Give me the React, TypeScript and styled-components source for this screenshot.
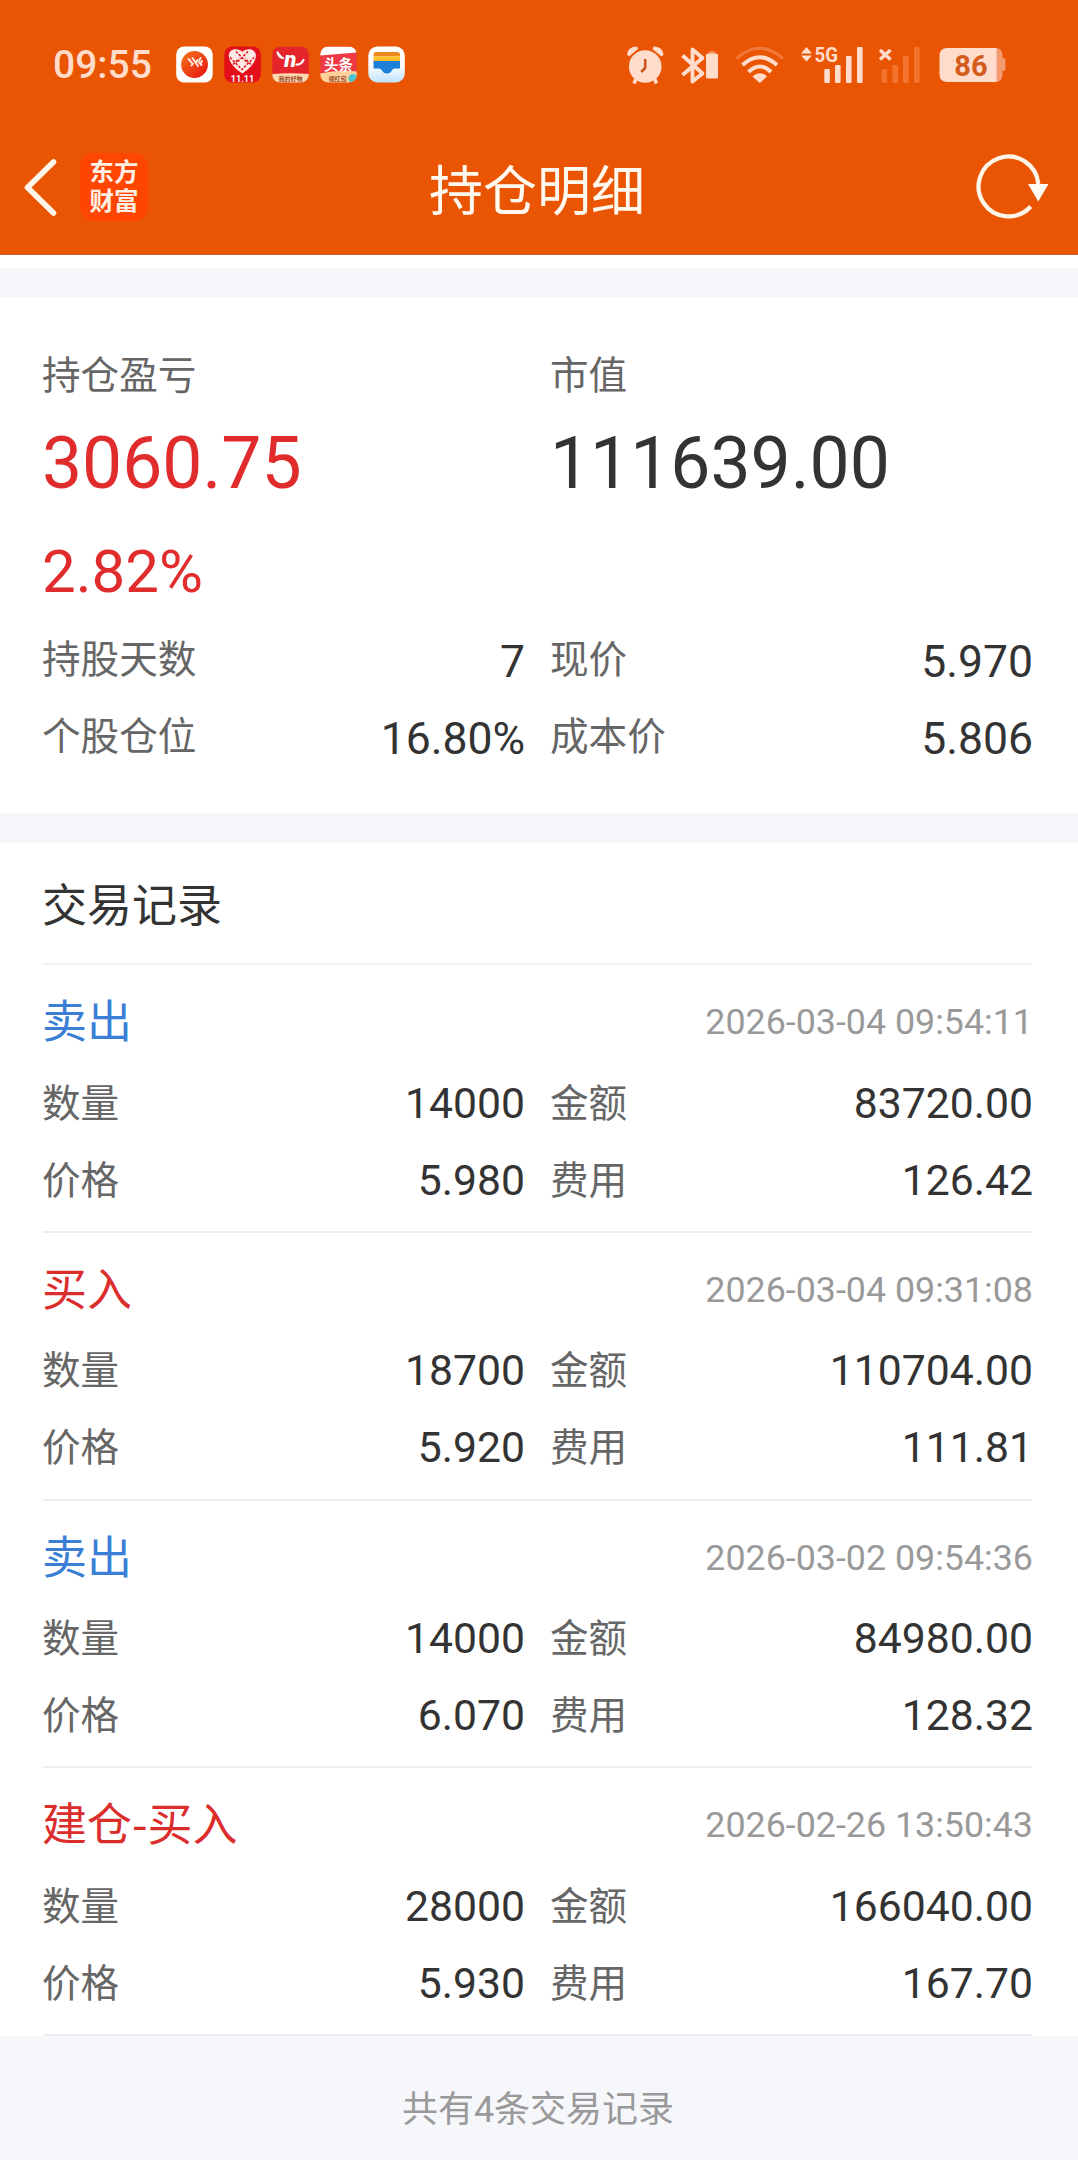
import React from "react";
import styled, { createGlobalStyle } from "styled-components";

const cjk = `"Noto Sans CJK SC", sans-serif`;
const latin = `Roboto, "Noto Sans CJK SC", sans-serif`;
const tint = "#ffdccb";

const GlobalStyle = createGlobalStyle`
  * { box-sizing: border-box; }
  body { margin: 0; background: #f6f7fa; font-family: ${cjk}; color: #333; }
`;

const Screen = styled.div`
  width: 1078px;
  height: 2160px;
  display: flex;
  flex-direction: column;
  overflow: hidden;
`;

const Header = styled.header`
  height: 255px;
  flex: none;
  background: #ea5504;
  border-bottom: 1px solid #c4602a;
`;

const StatusBar = styled.div`
  height: 120px;
  padding: 10px 72px 0 53px;
  display: flex;
  align-items: center;
  justify-content: space-between;
`;

const StatusGroup = styled.div<{ $gap?: number }>`
  display: flex;
  align-items: center;
  gap: ${(p) => p.$gap ?? 0}px;
  svg { display: block; flex: none; overflow: visible; }
`;

const Clock = styled.span`
  width: 112px;
  font: 500 39px/40px ${latin};
  color: ${tint};
`;

const NavBar = styled.div`
  height: 134px;
  padding: 0 28px 0 24px;
  display: grid;
  grid-template-columns: 56px 1fr 216px 1fr 74px;
  align-items: center;
  svg { display: block; }
`;

const AppBadge = styled.div`
  width: 68px;
  height: 68px;
  border-radius: 14px;
  background: #ff4600;
  color: #fff0e6;
  font: 700 24.5px/29px ${latin};
  display: flex;
  flex-direction: column;
  align-items: center;
  justify-content: center;
`;

const Title = styled.h1`
  margin: 0 -9px 0 9px;
  padding-top: 2px;
  font: 400 54px/68px ${cjk};
  color: #fff9f0;
`;

const Band = styled.div<{ $h: number; $white?: boolean }>`
  height: ${(p) => p.$h}px;
  flex: none;
  background: ${(p) => (p.$white ? "#fff" : "#f6f7fa")};
`;

const Summary = styled.section`
  height: 516px;
  flex: none;
  background: #fff;
  padding: 47px 45px 0 42px;
`;

const Columns = styled.div`
  display: grid;
  grid-template-columns: 483px 483px;
  column-gap: 25px;
`;

const Label = styled.span`
  font: 400 38.6px/56px ${cjk};
  color: #666;
`;

const Figure = styled.div<{ $size: number; $line: number; $up?: boolean }>`
  font: 400 ${(p) => p.$size}px/${(p) => p.$line}px ${latin};
  color: ${(p) => (p.$up ? "#e02c2c" : "#333")};
`;

const Headline = styled.div`
  height: 279px;
`;

const Pair = styled.div<{ $h: number; $drop: number }>`
  height: ${(p) => p.$h}px;
  display: flex;
  align-items: center;
  justify-content: space-between;
  ${Label} { margin-bottom: ${(p) => p.$drop}px; }
`;

const Value = styled.span<{ $size: number }>`
  font: 400 ${(p) => p.$size}px/56px ${latin};
  color: #333;
`;

const Records = styled.section`
  flex: none;
  background: #fff;
`;

const RecordsTitle = styled.h2`
  margin: 0 46px 0 43px;
  height: 122px;
  border-bottom: 2px solid #f0f0f0;
  font: 400 45px/119px ${cjk};
  text-indent: -1px;
`;

const Record = styled.article`
  margin: 0 46px 0 43px;
  height: 267.75px;
  padding-top: 17px;
  border-bottom: 2px solid #ededef;
`;

const RecordHead = styled.div`
  height: 82px;
  padding-bottom: 2px;
  display: flex;
  align-items: center;
  justify-content: space-between;
`;

const RecordFields = styled(Columns)`
  margin: 0 -1px;
`;

const Side = styled.span<{ $sell: boolean }>`
  font: 400 45px/66px ${cjk};
  padding-bottom: 6px;
  margin-left: -1px;
  color: ${(p) => (p.$sell ? "#3a7fd5" : "#dc2d2d")};
`;

const Stamp = styled.time`
  font: 400 35.8px/50px ${latin};
  margin-right: -1px;
  color: #999;
`;

const Footer = styled.footer`
  flex: 1;
  text-align: center;
  padding: 48px 2px 0 0;
  font: 400 36px/52px ${latin};
  color: #999;
`;

const BackIcon = () => (
  <svg width="34" height="60" viewBox="24.500 157 34 60" fill="none" stroke="#fff6ea" strokeWidth="5.6">
    <path d="M54 162 28 187.500 54 213" strokeLinecap="round" strokeLinejoin="round" />
  </svg>
);

const RefreshIcon = () => (
  <svg width="74" height="70" viewBox="976 152 74 70">
    <path d="M1038.300 184A29.900 29.900 0 1 0 1030.700 206.500" fill="none" stroke="#fff4e8" strokeWidth="4.300" />
    <path d="M1028 184h20.500L1038.300 201.500z" fill="#fffaf4" />
  </svg>
);

const AppIcons = () => (
  <svg width="230" height="38" viewBox="176 46.500 230 38">
    <defs>
      <linearGradient id="ball" x1="0" y1="0" x2="1" y2="1">
        <stop stopColor="#f5791b" /><stop offset="1" stopColor="#e80c10" />
      </linearGradient>
      <linearGradient id="paper" x1="0" y1="0" x2="0" y2="1">
        <stop offset=".5" stopColor="#fff" /><stop offset="1" stopColor="#bfe2fb" />
      </linearGradient>
      <clipPath id="tile3"><rect x="272.300" y="47" width="36.500" height="36" rx="8" /></clipPath>
      <clipPath id="tile4"><rect x="320.300" y="47" width="36.500" height="36" rx="8" /></clipPath>
    </defs>
    <rect x="176.200" y="47" width="36.500" height="36" rx="8" fill="#fff" />
    <circle cx="194.500" cy="65" r="13.400" fill="url(#ball)" />
    <path d="M188.500 59.500l3 3.500M192.500 58.500l5.500 8M191.500 66l1.500-2M197.500 60.500l-1.500 2.500M200.500 58.500l-1 2M199 62.500l2.500 3M202 61.500l-1.500 2.500" stroke="#ffe9df" strokeWidth="2" fill="none" strokeLinecap="round" />

    <rect x="224.300" y="47" width="36.500" height="36" rx="8" fill="#e30f1b" />
    <path d="M242.300 52.500c3-4 13-4 13.500 3 .3 8-7 14-13.500 18.500-6.500-4.500-13.800-10.500-13.500-18.500.5-7 10.500-7 13.500-3z" fill="#ffe9e4" />
    <path d="M230 58l12 12 12-12M236 52l12 12M248 52l-12 12M233 65l6-6M251 65l-6-6" stroke="#e30f1b" strokeWidth="1.500" strokeDasharray="2.500 1.500" fill="none" />
    <text x="242.500" y="82" fontFamily="Roboto" fontWeight="700" fontSize="9" textAnchor="middle" fill="#fff">11.11</text>

    <g clipPath="url(#tile3)">
      <rect x="272" y="47" width="37" height="37" fill="#e5242b" />
      <path d="M272 74.500q18.500-1.500 37 0v10h-37z" fill="#ffd9b0" />
      <path d="M277.500 53q1.500 5 5.500 5.500M303.500 60.500q-2.500 5-7 4.500" stroke="#fff" strokeWidth="2.200" fill="none" strokeLinecap="round" />
      <path d="M278.500 52.500l4.500 6-3.500-1z" fill="#fff" />
    </g>
    <text x="290.300" y="67" fontFamily="Roboto" fontWeight="900" fontStyle="italic" fontSize="22" textAnchor="middle" fill="#fff">n</text>
    <text x="290.500" y="81.500" fontFamily="Roboto, Noto Sans CJK SC" fontWeight="700" fontSize="6" textAnchor="middle" fill="#9a4a2c">我的好物</text>

    <g clipPath="url(#tile4)">
      <rect x="320" y="47" width="37" height="37" fill="#ee3843" />
      <path d="M320 47h37v6l-37 3z" fill="#fff" />
      <path d="M320 74q18-4 37-2v12h-37z" fill="#ffd09a" />
      <circle cx="353" cy="79" r="4.500" fill="#4cc4cf" />
    </g>
    <text x="338.500" y="70.500" fontFamily="Roboto, Noto Sans CJK SC" fontWeight="700" fontSize="14.500" textAnchor="middle" fill="#fff">头条</text>
    <text x="337.500" y="81.500" fontFamily="Roboto, Noto Sans CJK SC" fontWeight="700" fontSize="6" textAnchor="middle" fill="#9a4a2c">领红包</text>

    <rect x="368.300" y="47" width="36.500" height="36" rx="9" fill="url(#paper)" />
    <path d="M373.500 57v-2q0-2.500 2.500-2.500h21.500q2.500 0 2.500 2.500v2z" fill="#ee8a1c" />
    <path d="M373.500 57h26.500v5h-26.500z" fill="#fbc02b" />
    <path d="M373.500 61.500h26.500v7.500h-5.500q-2 0-3 2.500-1.200 2.500-4.500 2.500t-4.700-2.500q-1-2.500-3-2.500h-5.800z" fill="#1c80d8" />
  </svg>
);

const AlarmIcon = () => (
  <svg width="54" height="39" viewBox="627 44.500 54 39">
    <g fill={tint}>
      <circle cx="645.200" cy="65" r="16.300" />
      <path d="M627 53q1-8 10-8l1 2.500-9 7.500zM663.500 53q-1-8-10-8l-1 2.500 9 7.500z" />
    </g>
    <path d="M636 77l-2 5M654.500 77l2 5" stroke={tint} strokeWidth="3.500" />
    <path d="M645.200 57.500v9l-4 4" fill="none" stroke="#c8551c" strokeWidth="2.600" />
  </svg>
);

const BluetoothIcon = () => (
  <svg width="54" height="39" viewBox="681 44.500 54 39">
    <path d="M682.500 54l20 18L692.500 80V48L702.500 56.500 682.500 73.500" fill="none" stroke={tint} strokeWidth="3.900" strokeLinejoin="round" />
    <path d="M709 49.500h6v3h-6z" fill="#f08a55" />
    <rect x="706" y="52" width="12" height="25" rx="1.500" fill={tint} />
  </svg>
);

const WifiIcon = () => (
  <svg width="65" height="38" viewBox="735 45 65 38" fill="none" strokeWidth="4">
    <path d="M736.500 57.500q23-20.500 46.500 0" stroke="#f58f5e" strokeOpacity=".6" strokeWidth="3" />
    <path d="M742.500 64q17.300-15.500 34.500 0" stroke={tint} />
    <path d="M748.500 71q11.300-11 22.500 0" stroke={tint} />
    <path d="M752.500 75.500q7.300-6.500 14.500 0l-7.200 6.500z" fill={tint} />
  </svg>
);

const SignalIcon = () => (
  <svg width="79" height="38" viewBox="800 45 79 38" fill={tint}>
    <path d="M801 52.500l5.500-6.500 5.500 6.500zM801 54.500h11l-5.500 6z" />
    <text x="814.500" y="61" fontFamily="Roboto" fontWeight="700" fontSize="20.500" textLength="23.500" lengthAdjust="spacingAndGlyphs">5G</text>
    <rect x="824.300" y="68" width="5.600" height="14" rx="1" />
    <rect x="835" y="64" width="5.600" height="18" rx="1" />
    <rect x="846" y="55" width="5.600" height="27" rx="1" />
    <rect x="857" y="46" width="5.600" height="36" rx="1" />
  </svg>
);

const NoSignalIcon = () => (
  <svg width="60.5" height="38" viewBox="879 45 60.500 38" fill="#f3742f">
    <path d="M880 49l10.500 9.500M890.500 49L880 58.500" stroke={tint} strokeWidth="3.400" />
    <rect x="881.500" y="68" width="5.600" height="14" rx="1" />
    <rect x="892.500" y="64" width="5.600" height="18" rx="1" />
    <rect x="903" y="55" width="5.600" height="27" rx="1" />
    <rect x="914" y="46" width="5.600" height="36" rx="1" />
  </svg>
);

const BatteryIcon = () => (
  <svg width="67" height="36" viewBox="939.500 47 67 36">
    <path d="M996 48h1q6 1 6 7v3h1q2 0 2 3v7q0 3-2 3h-1v4q0 6-6 7h-1z" fill="#f39b70" />
    <path d="M948 48h49v34h-49q-8 0-8-8V56q0-8 8-8z" fill={tint} />
    <text x="971.500" y="75.500" fontFamily="Roboto" fontWeight="700" fontSize="29" textAnchor="middle" fill="#d35c1c">86</text>
  </svg>
);

interface Trade {
  side: string;
  sell: boolean;
  time: string;
  quantity: string;
  amount: string;
  price: string;
  fee: string;
}

const trades: Trade[] = [
  { side: "卖出", sell: true, time: "2026-03-04 09:54:11", quantity: "14000", amount: "83720.00", price: "5.980", fee: "126.42" },
  { side: "买入", sell: false, time: "2026-03-04 09:31:08", quantity: "18700", amount: "110704.00", price: "5.920", fee: "111.81" },
  { side: "卖出", sell: true, time: "2026-03-02 09:54:36", quantity: "14000", amount: "84980.00", price: "6.070", fee: "128.32" },
  { side: "建仓-买入", sell: false, time: "2026-02-26 13:50:43", quantity: "28000", amount: "166040.00", price: "5.930", fee: "167.70" },
];

interface FieldProps {
  label: string;
  value: string;
  size?: number;
  drop?: number;
}

const Field = ({ label, value, size = 42.7, drop = 6 }: FieldProps) => (
  <Pair $h={77} $drop={drop}>
    <Label>{label}</Label>
    <Value $size={size}>{value}</Value>
  </Pair>
);

export default function App() {
  return (
    <Screen>
      <GlobalStyle />
      <Header>
        <StatusBar>
          <StatusGroup $gap={11}>
            <Clock>09:55</Clock>
            <AppIcons />
          </StatusGroup>
          <StatusGroup>
            <AlarmIcon />
            <BluetoothIcon />
            <WifiIcon />
            <SignalIcon />
            <NoSignalIcon />
            <BatteryIcon />
          </StatusGroup>
        </StatusBar>
        <NavBar>
          <BackIcon />
          <AppBadge><span>东方</span><span>财富</span></AppBadge>
          <Title>持仓明细</Title>
          <span />
          <RefreshIcon />
        </NavBar>
      </Header>
      <Band $h={13} $white />
      <Band $h={29} />
      <Summary>
        <Columns>
          <Headline>
            <Label>持仓盈亏</Label>
            <Figure $size={71.4} $line={128} $up>3060.75</Figure>
            <Figure $size={60} $line={87} $up>2.82%</Figure>
          </Headline>
          <Headline>
            <Label>市值</Label>
            <Figure $size={71.4} $line={128}>111639.00</Figure>
          </Headline>
          <Field label="持股天数" value="7" size={44.5} drop={12} />
          <Field label="现价" value="5.970" size={44.5} drop={12} />
          <Field label="个股仓位" value="16.80%" size={44.5} drop={12} />
          <Field label="成本价" value="5.806" size={44.5} drop={12} />
        </Columns>
      </Summary>
      <Band $h={30} />
      <Records>
        <RecordsTitle>交易记录</RecordsTitle>
        {trades.map((t) => (
          <Record key={t.time}>
            <RecordHead>
              <Side $sell={t.sell}>{t.side}</Side>
              <Stamp>{t.time}</Stamp>
            </RecordHead>
            <RecordFields>
              <Field label="数量" value={t.quantity} />
              <Field label="金额" value={t.amount} />
              <Field label="价格" value={t.price} />
              <Field label="费用" value={t.fee} />
            </RecordFields>
          </Record>
        ))}
      </Records>
      <Footer>共有4条交易记录</Footer>
    </Screen>
  );
}
